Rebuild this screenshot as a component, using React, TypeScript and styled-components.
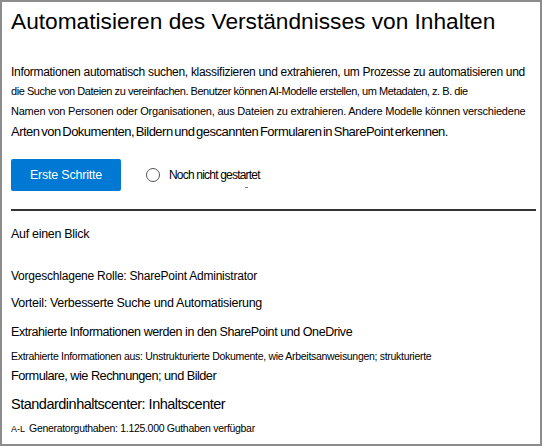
import React from 'react'
import styled, { createGlobalStyle } from 'styled-components'

const GlobalStyle = createGlobalStyle`
    html, body {
        margin: 0;
        padding: 0;
        background: #ffffff;
    }
    body {
        font-family: "Liberation Sans", Arial, sans-serif;
        color: #111111;
    }
`

type LineProps = {
    $size: number
    $lh?: number
    $gap?: number
    $track?: number
    $words?: number
}

const Frame = styled.div`
    box-sizing: border-box;
    width: 542px;
    height: 446px;
    border: 2px solid #8c8c8c;
    padding: 4px 4px 0 9px;
    display: flex;
    flex-direction: column;
    overflow: hidden;
`

const Title = styled.h1`
    margin: 0;
    font-size: 22.7px;
    line-height: 30px;
    font-weight: 400;
    color: #000000;
    white-space: nowrap;
`

const Description = styled.div`
    margin-top: 27px;
    display: flex;
    flex-direction: column;
`

const Line = styled.div<LineProps>`
    font-size: ${p => p.$size}px;
    line-height: ${p => p.$lh ?? 20}px;
    margin-top: ${p => p.$gap ?? 0}px;
    letter-spacing: ${p => p.$track ?? 0}px;
    word-spacing: ${p => p.$words ?? 0}px;
    white-space: nowrap;
    color: #000000;
`

const Actions = styled.div`
    margin-top: 16px;
    display: flex;
    align-items: center;
`

const PrimaryButton = styled.button`
    width: 110px;
    height: 32px;
    border: none;
    border-radius: 2px;
    background: #0078d4;
    color: #ffffff;
    font-family: inherit;
    font-size: 12.5px;
    letter-spacing: -0.2px;
    cursor: pointer;
`

const Status = styled.label`
    position: relative;
    margin-left: 25px;
    display: flex;
    align-items: center;
    gap: 9px;
    font-size: 12px;
    letter-spacing: -0.8px;
    color: #000000;

    &::after {
        content: '';
        position: absolute;
        left: 99px;
        bottom: -6px;
        width: 3px;
        height: 1px;
        background: #777777;
    }
`

const Radio = styled.span`
    box-sizing: border-box;
    width: 14px;
    height: 14px;
    border: 1px solid #555555;
    border-radius: 50%;
`

const Divider = styled.hr`
    margin: 18px 0 0 0;
    border: none;
    height: 1.5px;
    background: #333333;
`

const Details = styled.div`
    margin-top: 12px;
    display: flex;
    flex-direction: column;
`

const Prefix = styled.span`
    font-size: 9px;
    letter-spacing: 0;
    margin-right: 4px;
`

const App: React.FC = () => {
    return (
        <>
            <GlobalStyle />
            <Frame>
                <Title>Automatisieren des Verständnisses von Inhalten</Title>
                <Description>
                    <Line $size={12} $lh={18} $track={-0.3}>
                        Informationen automatisch suchen, klassifizieren und extrahieren, um Prozesse zu automatisieren und
                    </Line>
                    <Line $size={11} $track={-0.46}>
                        die Suche von Dateien zu vereinfachen. Benutzer können AI-Modelle erstellen, um Metadaten, z. B. die
                    </Line>
                    <Line $size={11} $track={-0.22}>
                        Namen von Personen oder Organisationen, aus Dateien zu extrahieren. Andere Modelle können verschiedene
                    </Line>
                    <Line $size={13} $lh={22} $track={-0.5} $words={-1.5}>
                        Arten von Dokumenten, Bildern und gescannten Formularen in SharePoint erkennen.
                    </Line>
                </Description>
                <Actions>
                    <PrimaryButton>Erste Schritte</PrimaryButton>
                    <Status>
                        <Radio />
                        Noch nicht gestartet
                    </Status>
                </Actions>
                <Divider />
                <Details>
                    <Line $size={12.5} $gap={1} $track={-0.3}>Auf einen Blick</Line>
                    <Line $size={12} $gap={22} $track={-0.22}>Vorgeschlagene Rolle: SharePoint Administrator</Line>
                    <Line $size={12.5} $gap={7} $track={-0.3}>Vorteil: Verbesserte Suche und Automatisierung</Line>
                    <Line $size={12.5} $gap={9} $track={-0.43}>Extrahierte Informationen werden in den SharePoint und OneDrive</Line>
                    <Line $size={10.5} $gap={4} $track={-0.3}>
                        Extrahierte Informationen aus: Unstrukturierte Dokumente, wie Arbeitsanweisungen; strukturierte
                    </Line>
                    <Line $size={12.8} $track={-0.55}>Formulare, wie Rechnungen; und Bilder</Line>
                    <Line $size={14.5} $gap={8} $track={-0.5}>Standardinhaltscenter: Inhaltscenter</Line>
                    <Line $size={10.5} $gap={4} $track={-0.3}>
                        <Prefix>A-L</Prefix>Generatorguthaben: 1.125.000 Guthaben verfügbar
                    </Line>
                </Details>
            </Frame>
        </>
    )
}

export default App
